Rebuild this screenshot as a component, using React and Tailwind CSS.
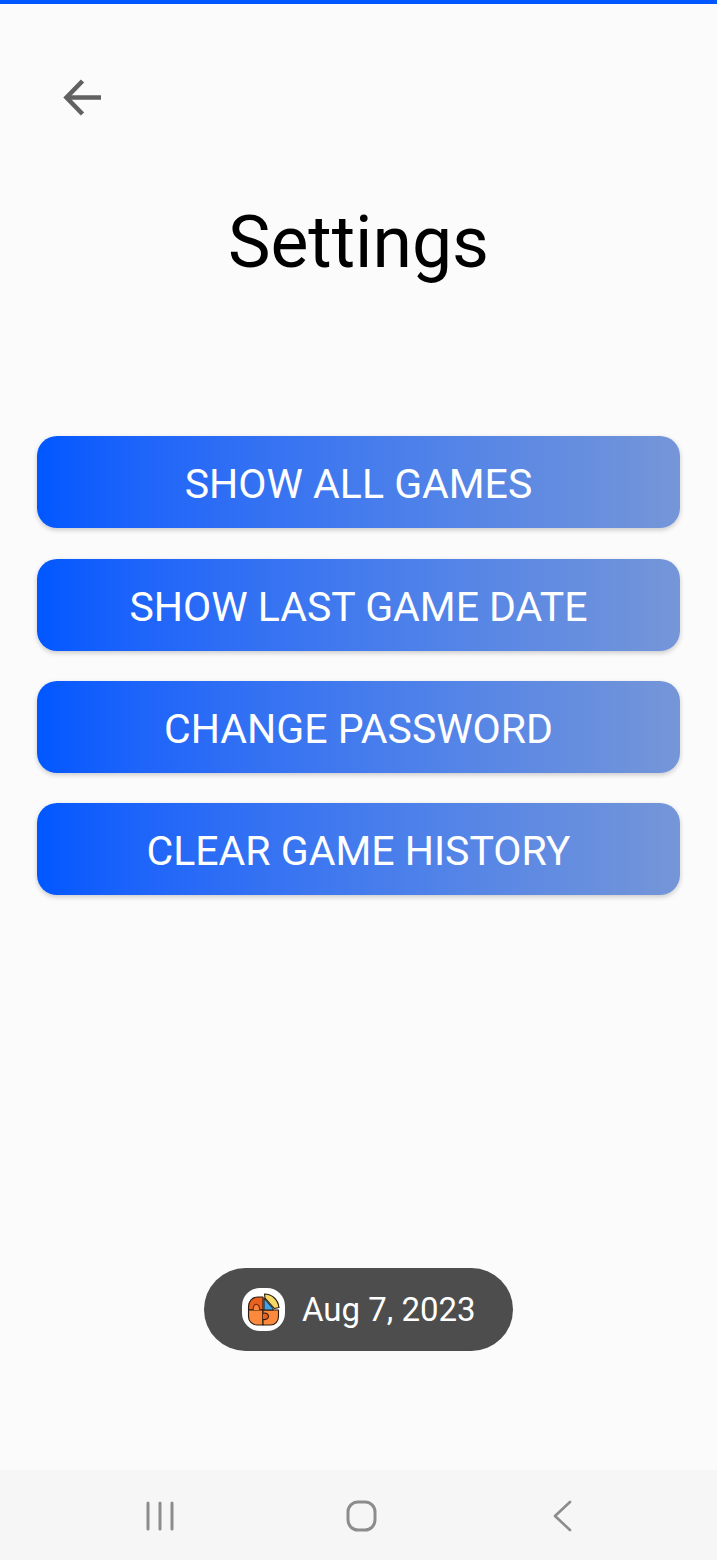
import React from 'react';

const buttons = ['SHOW ALL GAMES', 'SHOW LAST GAME DATE', 'CHANGE PASSWORD', 'CLEAR GAME HISTORY'];

function AppIcon() {
  return (
    <div className="w-[43px] h-[43px] rounded-[18px] bg-white flex items-center justify-center">
      <svg width="33" height="33" viewBox="0 0 33 33" strokeLinejoin="round">
        <path d="M16 4 L11 4 C5 4 1.5 8.5 1.5 14 L1.5 17 L16 17 Z" fill="#e8611f" stroke="#2a1a10" strokeWidth="1.1" />
        <path d="M1.5 17 L16 17 L16 32 L10 32 C5 32 1.5 28 1.5 23.5 Z" fill="#fb8a3c" stroke="#2a1a10" strokeWidth="1.1" />
        <path d="M16 17 L31.5 17 L31.5 23.5 C31.5 28.5 28 32 23.5 32 L16 32 Z" fill="#fb8a3c" stroke="#2a1a10" strokeWidth="1.1" />
        <path d="M17 5 L26 15.5 L26 17 L17 17 Z" fill="#3fa4e8" stroke="#2a1a10" strokeWidth="1.1" />
        <path d="M17.5 1 C25 1 31 6.5 32 14.5 L27.5 15.5 L18 5 Z" fill="#f6d964" stroke="#2a1a10" strokeWidth="1.1" />
        <path d="M6.5 17 C5 10 13 9 12.5 17" fill="#fb8a3c" stroke="#7a2c10" strokeWidth="1.1" />
        <path d="M16 20.5 C22 18 24.5 27.5 16 26.5" fill="#e8611f" stroke="#2a1a10" strokeWidth="1.1" />
      </svg>
    </div>
  );
}

export default function App() {
  return (
    <div className="w-[717px] h-[1560px] flex flex-col bg-[#fbfbfb] overflow-hidden font-['Roboto',sans-serif]">
      <div className="h-1 bg-[#0057ff] shrink-0" />

      {/* Back arrow */}
      <div className="pl-[60px] pt-[71px]">
        <svg width="45" height="45" viewBox="0 0 45 45" fill="none" stroke="#616161" strokeWidth="4.6" strokeLinecap="butt" strokeLinejoin="miter">
          <path d="M41 22.5 L7 22.5" />
          <path d="M22.5 6 L6.5 22.5 L22.5 39" />
        </svg>
      </div>

      <h1 className="mt-[81px] text-center text-[71.5px] leading-[84px] text-black font-normal">Settings</h1>

      {/* Buttons */}
      <div className="mt-[151.4px] mx-[37px] flex flex-col gap-[30.33px]">
        {buttons.map((label) => (
          <button
            key={label}
            className="h-[92px] w-full pt-[5px] rounded-[20px] bg-gradient-to-r from-[#0057ff] to-[#7596d8] shadow-[0_2px_5px_rgba(0,0,0,0.2)] text-white text-[41px] leading-none font-normal"
          >
            {label}
          </button>
        ))}
      </div>

      {/* Toast */}
      <div className="mt-[373px] flex justify-center">
        <div className="h-[83px] w-[309px] rounded-full bg-[#4d4d4d] flex items-center pl-[38px] gap-[17px]">
          <AppIcon />
          <span className="text-[33px] text-white leading-none">Aug 7, 2023</span>
        </div>
      </div>

      {/* Android nav bar */}
      <div className="mt-auto h-[90px] bg-[#f6f6f6] flex items-center pl-[145px] pt-[2px]">
        <svg width="30" height="32" viewBox="0 0 30 32" stroke="#8c8c8c" strokeWidth="3" strokeLinecap="round">
          <path d="M3 3 V29 M15 3 V29 M27 3 V29" />
        </svg>
        <svg className="ml-[171px]" width="31" height="32" viewBox="0 0 31 32" fill="none" stroke="#8c8c8c" strokeWidth="3">
          <rect x="2" y="2" width="27" height="28" rx="10" />
        </svg>
        <svg className="ml-[176px]" width="20" height="32" viewBox="0 0 20 32" fill="none" stroke="#8c8c8c" strokeWidth="2.6" strokeLinecap="round" strokeLinejoin="round">
          <path d="M17 2 L2 16 L17 30" />
        </svg>
      </div>
    </div>
  );
}
